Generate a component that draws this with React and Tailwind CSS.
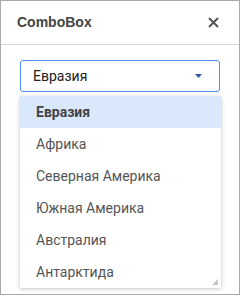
import React from "react";

const items = ["Евразия", "Африка", "Северная Америка", "Южная Америка", "Австралия", "Антарктида"];

export default function App() {
  const selected = 0;
  return (
    <div className="w-[240px] h-[297px] bg-white font-['Roboto',sans-serif]">
      <div className="relative w-[240px] h-[295px] border border-[#a9a9a9] bg-white">
        <div className="h-[44px] border-b border-[#d6d6d6] flex items-center justify-between pl-[16px] pr-[20px]">
          <span className="text-[14px] font-bold text-[#444] font-['Liberation_Sans',sans-serif]">ComboBox</span>
          <svg width="11" height="11" viewBox="0 0 11 11">
            <path d="M1 1 L10 10 M10 1 L1 10" stroke="#555" strokeWidth="2" />
          </svg>
        </div>
        <div className="pt-[15px] pl-[19px]">
          <div className="w-[200px] h-[32px] border border-[#4d8ff0] rounded-[3px] flex items-center justify-between pl-[12px] pr-[17px]">
            <span className="text-[14px] text-[#222]">Евразия</span>
            <svg width="7" height="4" viewBox="0 0 7 4">
              <path d="M0 0 L7 0 L3.5 4 Z" fill="#2a5aa0" />
            </svg>
          </div>
          <div className="relative mt-[4px] w-[201px] bg-white shadow-[0_1px_4px_rgba(0,0,0,0.25)]">
            {items.map((it, i) => (
              <div
                key={it}
                className={
                  i === selected
                    ? "h-[32px] flex items-center pl-[16px] bg-[#dae8fc] text-[14px] font-bold text-[#444]"
                    : "h-[32px] flex items-center pl-[16px] text-[14px] text-[#555]"
                }
              >
                {it}
              </div>
            ))}
            <svg className="absolute right-[3px] bottom-[3px]" width="6" height="6" viewBox="0 0 6 6">
              <path d="M6 0 L6 6 L0 6 Z" fill="#c4c4c4" />
            </svg>
          </div>
        </div>
      </div>
    </div>
  );
}
